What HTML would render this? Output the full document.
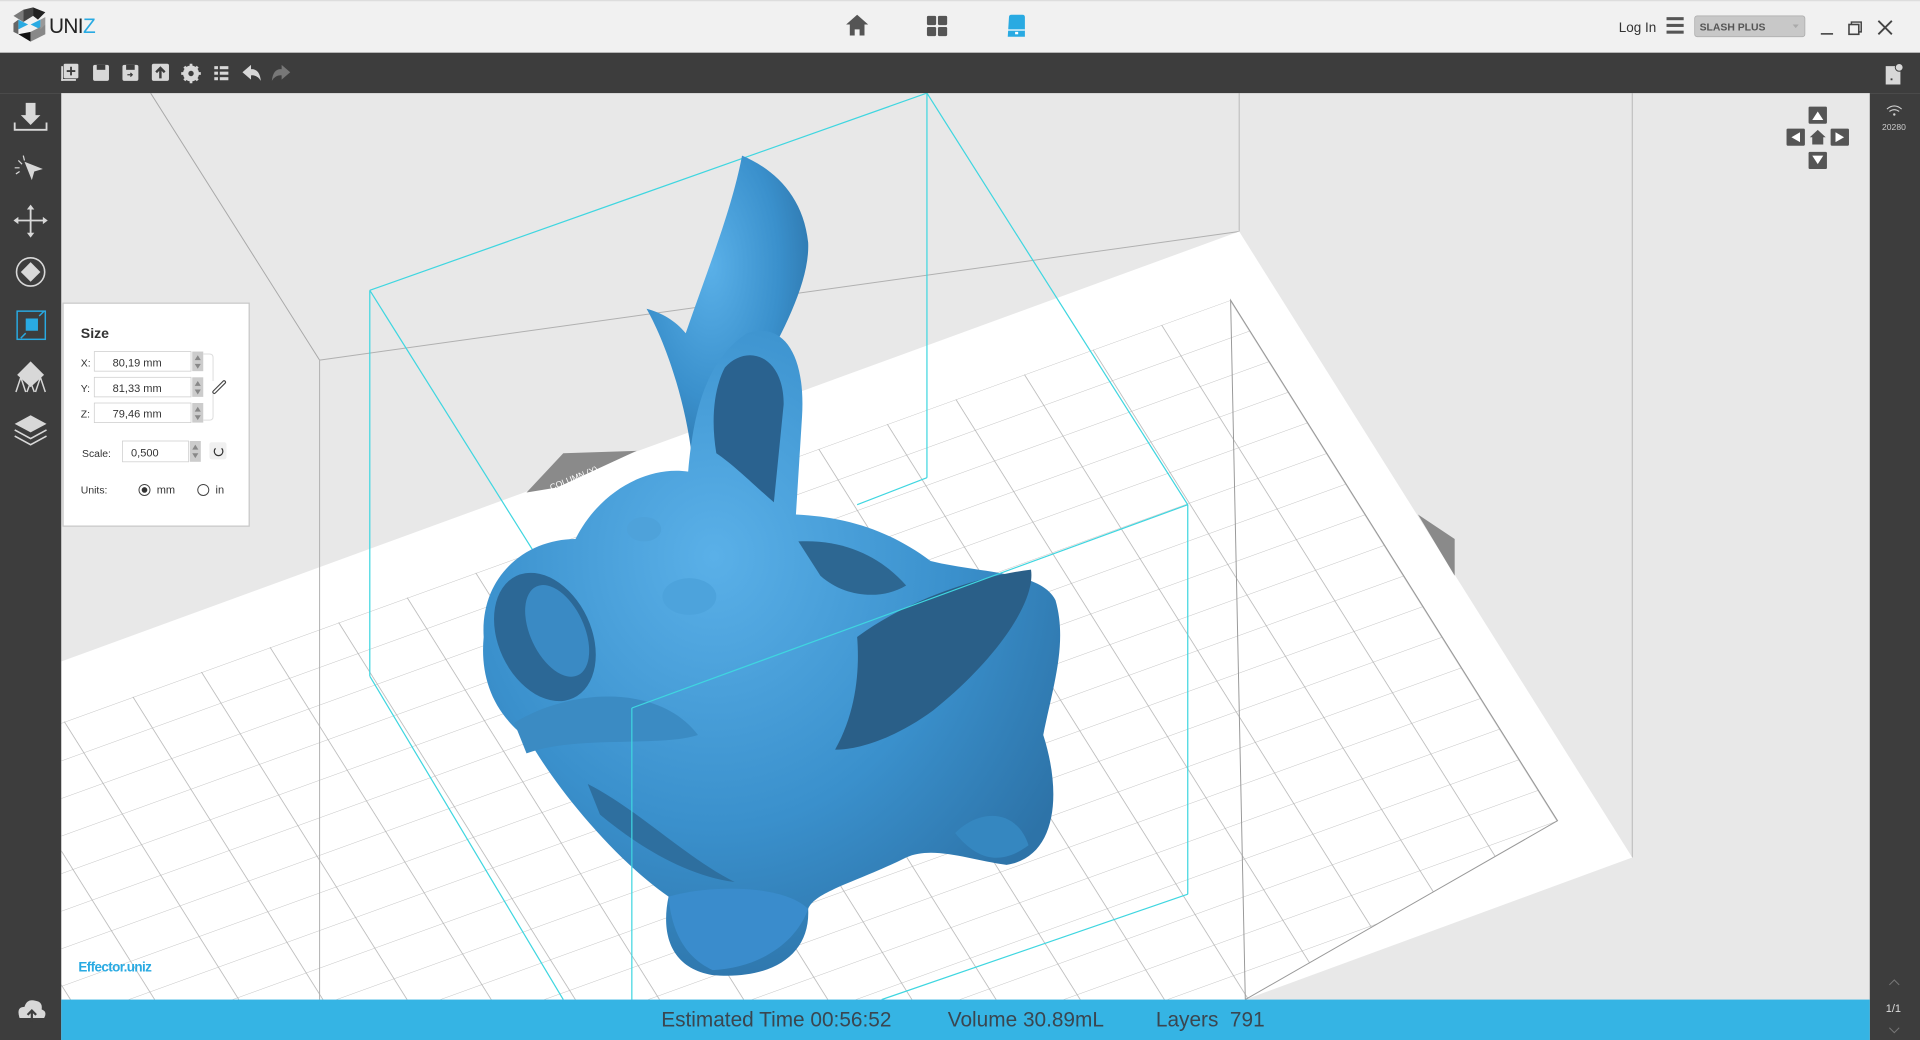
<!DOCTYPE html>
<html><head><meta charset="utf-8"><style>
html,body{margin:0;padding:0;width:1920px;height:1040px;overflow:hidden;background:#e8e8e8}
svg{display:block}
text{font-family:"Liberation Sans",sans-serif}
</style></head><body>
<svg width="1920" height="1040" viewBox="0 0 1568 849" preserveAspectRatio="none" xmlns="http://www.w3.org/2000/svg">
<defs>
<pattern id="grid" patternUnits="userSpaceOnUse" width="100" height="100" patternTransform="matrix(0.157 0.25 -0.56 0.2025 1005 245)">
<path d="M0 0H100M0 0V100" stroke="#b0b0b0" stroke-width="2" fill="none"/>
</pattern>
<clipPath id="vp"><rect x="50" y="76" width="1477" height="740"/></clipPath>
<clipPath id="gridclip"><polygon points="1005,245 1272,670 1017,816 50,816 50,590"/></clipPath>
<radialGradient id="pg" cx="0.4" cy="0.35" r="0.7"><stop offset="0" stop-color="#5ab0e8"/><stop offset="0.6" stop-color="#3a90cc"/><stop offset="1" stop-color="#2d73a8"/></radialGradient>
</defs>
<rect x="50" y="76" width="1477" height="740" fill="#e8e8e8"/>
<g clip-path="url(#vp)">
<line x1="123" y1="76" x2="261" y2="294" stroke="#a8a8a8" stroke-width="0.8"/>
<line x1="261" y1="294" x2="1012" y2="189" stroke="#b0b0b0" stroke-width="0.8"/>
<line x1="1012" y1="76" x2="1012" y2="189" stroke="#b8b8b8" stroke-width="0.8"/>
<line x1="1333" y1="76" x2="1333" y2="700" stroke="#b8b8b8" stroke-width="0.8"/>
<polygon points="50,540 1012,189 1333,700 1017,816 50,816" fill="#ffffff"/>
<line x1="261" y1="294" x2="261" y2="816" stroke="#b0b0b0" stroke-width="0.8"/>
<rect x="50" y="76" width="1477" height="740" fill="url(#grid)" clip-path="url(#gridclip)"/>
<polygon points="1005,245 1272,670 1017,816" fill="none" stroke="#999" stroke-width="0.8"/>
<polygon points="430,402 460,370 520,368 455,398" fill="#8a8a8a"/>
<text x="447" y="392" font-size="7" fill="#fff" transform="rotate(-22 470 388)">COLUMN (Y)</text>
<polygon points="1158,420 1188,440 1188,470" fill="#8a8a8a"/>
<g stroke="#3fd6e0" stroke-width="1" fill="none">
<line x1="302" y1="237" x2="757" y2="76"/>
<line x1="757" y1="76" x2="757" y2="390"/>
<line x1="757" y1="76" x2="970" y2="412"/>
<line x1="302" y1="237" x2="302" y2="552"/>
<line x1="302" y1="237" x2="516" y2="578"/>
<line x1="302" y1="552" x2="460" y2="816"/>
<line x1="757" y1="390" x2="700" y2="412"/>
</g>
<path d="M528,252 C540,255 552,262 560,272 C578,220 598,170 606,127 C632,138 656,160 660,198 C662,240 622,300 602,340 L585,385 L565,372 C560,330 545,282 528,252 Z" fill="url(#pg)"/>
<path d="M395,520 C392,470 430,440 470,440 C490,400 530,380 562,385 C566,340 575,295 610,272 C640,262 658,290 655,340 L650,420 C690,422 725,432 760,458 C800,468 850,466 862,490 C872,525 860,560 852,600 C868,650 862,700 822,706 C792,702 762,690 740,700 C700,720 665,728 660,742 C662,780 630,800 582,796 C546,790 540,760 546,732 C500,700 452,640 432,604 C402,582 392,552 395,520 Z" fill="url(#pg)"/>
<path d="M592,300 C610,280 640,290 640,330 L632,410 C620,400 600,380 585,370 C580,340 584,315 592,300Z" fill="#2a628f"/>
<ellipse cx="445" cy="520" rx="38" ry="55" transform="rotate(-25 445 520)" fill="#2c6896"/>
<ellipse cx="455" cy="515" rx="22" ry="40" transform="rotate(-25 455 515)" fill="#3a8ac4"/>
<path d="M700,520 C740,490 800,470 842,465 C846,492 812,540 762,580 C732,602 702,612 682,612 C700,580 702,545 700,520Z" fill="#2a5f88"/>
<path d="M652,442 C690,440 720,455 740,478 C720,490 690,488 670,470Z" fill="#2d6792"/>
<ellipse cx="563" cy="487" rx="22" ry="15" fill="#4da3dc"/>
<ellipse cx="526" cy="432" rx="14" ry="10" fill="#4ea2da"/>
<path d="M420,590 C470,560 540,560 570,600 C540,610 470,600 430,615Z" fill="#3b8bc3"/>
<path d="M480,640 C520,660 560,700 600,720 C560,715 520,690 490,665Z" fill="#2e6f9f"/>
<path d="M546,732 C580,722 640,722 660,742 C650,770 620,790 582,792 C556,780 548,755 546,732Z" fill="#3a8ccc"/>
<path d="M780,680 C800,660 830,660 840,690 C820,705 800,705 780,680Z" fill="#3587c0"/>
<g stroke="#3fd6e0" stroke-width="1" fill="none">
<line x1="516" y1="578" x2="970" y2="412"/>
<line x1="516" y1="578" x2="516" y2="816"/>
<line x1="970" y1="412" x2="970" y2="730"/>
<line x1="970" y1="730" x2="720" y2="816"/>
</g>
<text x="64" y="793" font-size="11" fill="#29aae2" font-weight="bold" letter-spacing="-0.5">Effector.uniz</text>
<g fill="#555">
<rect x="1477" y="87" width="15" height="14" rx="1"/><rect x="1477" y="124" width="15" height="14" rx="1"/>
<rect x="1459" y="105" width="15" height="14" rx="1"/><rect x="1495" y="105" width="15" height="14" rx="1"/>
<path d="M1478,112 L1484.5,106 L1491,112 L1489,112 L1489,118 L1480,118 L1480,112Z"/>
</g>
<g fill="#fff">
<path d="M1480,98 L1484.5,91 L1489,98Z"/><path d="M1480,127 L1489,127 L1484.5,134Z"/>
<path d="M1470,108 L1470,116 L1463,112Z"/><path d="M1499,108 L1499,116 L1506,112Z"/>
</g>
</g>
<rect x="0" y="0" width="1568" height="43" fill="#f1f1f1"/>
<rect x="0" y="0" width="1568" height="1" fill="#ddd"/>
<g transform="translate(11,6)">
<polygon points="0,7 8,2 8,12" fill="#7a7a7a"/><polygon points="8,2 16,0 16,7 8,12" fill="#444"/>
<polygon points="16,0 26,4 20,10 16,7" fill="#222"/><polygon points="4,10 12,14 4,18" fill="#29aae2"/>
<polygon points="14,14 22,10 22,18" fill="#29aae2"/><polygon points="0,13 4,10 4,22 0,20" fill="#666"/>
<polygon points="4,22 14,28 14,20" fill="#111"/><polygon points="14,20 26,14 26,22 14,28" fill="#888"/>
<polygon points="22,10 26,8 26,14 22,18" fill="#999"/>
</g>
<text x="40" y="27" font-size="17" fill="#222" letter-spacing="-0.5">UNI<tspan fill="#29aae2">Z</tspan></text>
<path d="M691,20 L700,12 L709,20 L706,20 L706,29 L702,29 L702,24 L698,24 L698,29 L694,29 L694,20Z" fill="#555"/>
<g fill="#555"><rect x="757" y="13" width="7.5" height="7.5" rx="1"/><rect x="766" y="13" width="7.5" height="7.5" rx="1"/><rect x="757" y="22" width="7.5" height="7.5" rx="1"/><rect x="766" y="22" width="7.5" height="7.5" rx="1"/></g>
<path d="M824,14 Q824,12 826,12 L835,12 Q837,12 837,14 L837,30 L823,30Z" fill="#29aae2"/>
<rect x="823" y="24" width="14" height="1" fill="#fff"/><rect x="829" y="26" width="2.5" height="2" fill="#fff"/>
<text x="1322" y="26" font-size="11" fill="#333">Log In</text>
<g fill="#555"><rect x="1361" y="14" width="14" height="2.5"/><rect x="1361" y="19.5" width="14" height="2.5"/><rect x="1361" y="25" width="14" height="2.5"/></g>
<rect x="1384" y="13" width="90" height="17" rx="2" fill="#c8c8c8" stroke="#aaa" stroke-width="0.6"/>
<text x="1388" y="25" font-size="8.5" fill="#555" font-weight="bold">SLASH PLUS</text>
<path d="M1464,20 L1469,20 L1466.5,23Z" fill="#aaa"/>
<rect x="1487" y="27" width="10" height="1.3" fill="#444"/>
<rect x="1510" y="20" width="8" height="8" fill="none" stroke="#444" stroke-width="1.3"/><path d="M1512,20 V18 H1520 V26 H1518" fill="none" stroke="#444" stroke-width="1.2"/>
<path d="M1534,17 L1545,28 M1545,17 L1534,28" stroke="#444" stroke-width="1.5"/>
<rect x="0" y="43" width="1568" height="33" fill="#3d3d3d"/>
<rect x="0" y="76" width="50" height="773" fill="#3d3d3d"/>
<rect x="1527" y="76" width="41" height="773" fill="#3d3d3d"/>
<g fill="#d8d8d8">
<rect x="52" y="52" width="12" height="12" rx="1"/><rect x="50" y="54" width="1.5" height="12"/><rect x="50" y="64.5" width="12" height="1.5"/>
<rect x="76" y="53" width="13" height="13" rx="1.5"/>
<rect x="100" y="53" width="13" height="13" rx="1.5"/>
<rect x="124" y="52" width="14" height="14" rx="1.5"/>
<circle cx="156" cy="60" r="6.5"/>
<rect x="175" y="54" width="3" height="2.5"/><rect x="175" y="58.5" width="3" height="2.5"/><rect x="175" y="63" width="3" height="2.5"/>
<rect x="179.5" y="54" width="7" height="2.5"/><rect x="179.5" y="58.5" width="7" height="2.5"/><rect x="179.5" y="63" width="7" height="2.5"/>
<path d="M198,59 L205,53 L205,56.5 Q212,56 213,66 Q210,61 205,61.5 L205,65Z"/>
</g>
<path d="M237,59 L230,53 L230,56.5 Q223,56 222,66 Q225,61 230,61.5 L230,65Z" fill="#777"/>
<path d="M58,54.5 V61.5 M54.5,58 H61.5" stroke="#3d3d3d" stroke-width="1.5"/>
<rect x="79" y="53" width="7" height="4" fill="#3d3d3d"/><rect x="103" y="53" width="7" height="4" fill="#3d3d3d"/>
<path d="M104,61 H108 M106.5,59.5 L108,61 L106.5,62.5" stroke="#3d3d3d" stroke-width="1" fill="none"/>
<path d="M131,64 V56 M127.5,59 L131,55.5 L134.5,59" stroke="#3d3d3d" stroke-width="2" fill="none"/>
<circle cx="156" cy="60" r="2.2" fill="#3d3d3d"/>
<g stroke="#d8d8d8" stroke-width="2.2"><path d="M156,52 V54 M156,66 V68 M148,60 H150 M162,60 H164 M150.5,54.5 L152,56 M160,64 L161.5,65.5 M150.5,65.5 L152,64 M160,56 L161.5,54.5"/></g>
<g fill="#d8d8d8">
<path d="M21,84 H29 V94 H33 L25,102 L17,94 H21Z"/>
<path d="M12,100 V106 H38 V100" fill="none" stroke="#d8d8d8" stroke-width="1.5"/>
<path d="M20,132 L35,138 L28,140 L26,147Z"/>
<path d="M15,131 L18,134 M19,127 L20,131 M12,137 L16,137 M13,142 L16,140" stroke="#d8d8d8" stroke-width="1"/>
<path d="M25,169 V192 M13,180 H37" stroke="#d8d8d8" stroke-width="1.5"/>
<path d="M25,167 L22,171 H28Z M25,194 L22,190 H28Z M11,180 L15,177 V183Z M39,180 L35,177 V183Z"/>
<circle cx="25" cy="222" r="11.5" fill="none" stroke="#d8d8d8" stroke-width="1.3"/>
<path d="M25,214 L33,222 L25,230 L17,222Z"/>
<path d="M25,295 L36,306 L25,316 L14,306Z"/>
<path d="M13,320 L17,308 L21,320 M22,320 L25,312 L28,320 M29,320 L33,308 L37,320" fill="none" stroke="#d8d8d8" stroke-width="1.2"/>
<path d="M25,339 L38,346 L25,353 L12,346Z"/>
<path d="M12,351 L25,358 L38,351 M12,356 L25,363 L38,356" fill="none" stroke="#d8d8d8" stroke-width="1.3"/>
<path d="M16,831 Q13,822 20,822 Q22,815 29,817 Q35,818 34,824 Q39,826 36,831Z"/>
</g>
<path d="M26,834 V826 M22.5,828.5 L26,825 L29.5,828.5" stroke="#3d3d3d" stroke-width="1.8" fill="none"/>
<rect x="14" y="254" width="23" height="23" fill="none" stroke="#29aae2" stroke-width="1.2"/>
<rect x="21" y="260" width="10" height="10" fill="#29aae2"/>
<path d="M32,258 L36,254 M17,276 L21,272" stroke="#29aae2" stroke-width="1.2"/>
<path d="M1540,54 H1549 L1552,57 V69 H1540Z" fill="#d8d8d8"/><circle cx="1551" cy="55" r="3.2" fill="#d8d8d8" stroke="#3d3d3d" stroke-width="0.8"/>
<rect x="1544" y="64" width="1.5" height="1.5" fill="#3d3d3d"/>
<g fill="none" stroke="#d0d0d0" stroke-width="0.9"><path d="M1541,89 Q1547,84 1553,89 M1543,91 Q1547,88 1551,91"/></g>
<circle cx="1547" cy="93.5" r="1" fill="#d0d0d0"/>
<text x="1537" y="106" font-size="7" fill="#ccc">20280</text>
<text x="1540" y="826" font-size="9" fill="#ddd">1/1</text>
<path d="M1543,804 L1547,800 L1551,804 M1543,839 L1547,843 L1551,839" stroke="#777" stroke-width="0.8" fill="none"/>
<rect x="50" y="816" width="1477" height="33" fill="#35b4e4"/>
<g font-size="17" fill="#3a4650">
<text x="540" y="838">Estimated Time 00:56:52</text>
<text x="774" y="838">Volume 30.89mL</text>
<text x="944" y="838" xml:space="preserve">Layers  791</text>
</g>
<rect x="51.5" y="247.5" width="152" height="182" fill="#fff" stroke="#c8c8c8"/>
<text x="66" y="276" font-size="11.5" font-weight="bold" fill="#333">Size</text>
<g font-size="8.5" fill="#333">
<text x="66" y="299">X:</text><text x="66" y="320">Y:</text><text x="66" y="341">Z:</text>
<text x="67" y="373">Scale:</text><text x="66" y="403">Units:</text>
</g>
<g fill="#fff" stroke="#ccc" stroke-width="0.6">
<rect x="77" y="287" width="79" height="16"/><rect x="77" y="308" width="79" height="16"/><rect x="77" y="329" width="79" height="16"/>
<rect x="100" y="360" width="54" height="17"/>
</g>
<g fill="#ccc"><rect x="157" y="287" width="9" height="16"/><rect x="157" y="308" width="9" height="16"/><rect x="157" y="329" width="9" height="16"/><rect x="155" y="360" width="9" height="17"/></g>
<g fill="#888"><path d="M159,294 L161.5,290 L164,294Z M159,297 L164,297 L161.5,301Z M159,315 L161.5,311 L164,315Z M159,318 L164,318 L161.5,322Z M159,336 L161.5,332 L164,336Z M159,339 L164,339 L161.5,343Z M157,367 L159.5,363 L162,367Z M157,370 L162,370 L159.5,374Z"/></g>
<g font-size="9" fill="#333">
<text x="92" y="299">80,19  mm</text><text x="92" y="320">81,33  mm</text><text x="92" y="341">79,46  mm</text>
<text x="107" y="372.5">0,500</text>
<text x="128" y="403">mm</text><text x="176" y="403">in</text>
</g>
<path d="M166,289 H171 Q174,289 174,292 V340 Q174,343 171,343 H166" fill="none" stroke="#ddd" stroke-width="0.8"/>
<rect x="173" y="311" width="13" height="10" fill="#fff"/>
<path d="M175,320 L183,312" stroke="#444" stroke-width="3.2" fill="none" stroke-linecap="round"/><path d="M175,320 L183,312" stroke="#fff" stroke-width="1.4" stroke-linecap="round"/>
<rect x="171" y="361" width="14" height="14" rx="2" fill="#f0f0f0"/>
<path d="M181,366 A3.5,3.5 0 1 1 176,366" fill="none" stroke="#333" stroke-width="1"/>
<circle cx="118" cy="400" r="4.5" fill="none" stroke="#444" stroke-width="0.8"/><circle cx="118" cy="400" r="2.3" fill="#333"/>
<circle cx="166" cy="400" r="4.5" fill="none" stroke="#444" stroke-width="0.8"/>
</svg>
</body></html>
